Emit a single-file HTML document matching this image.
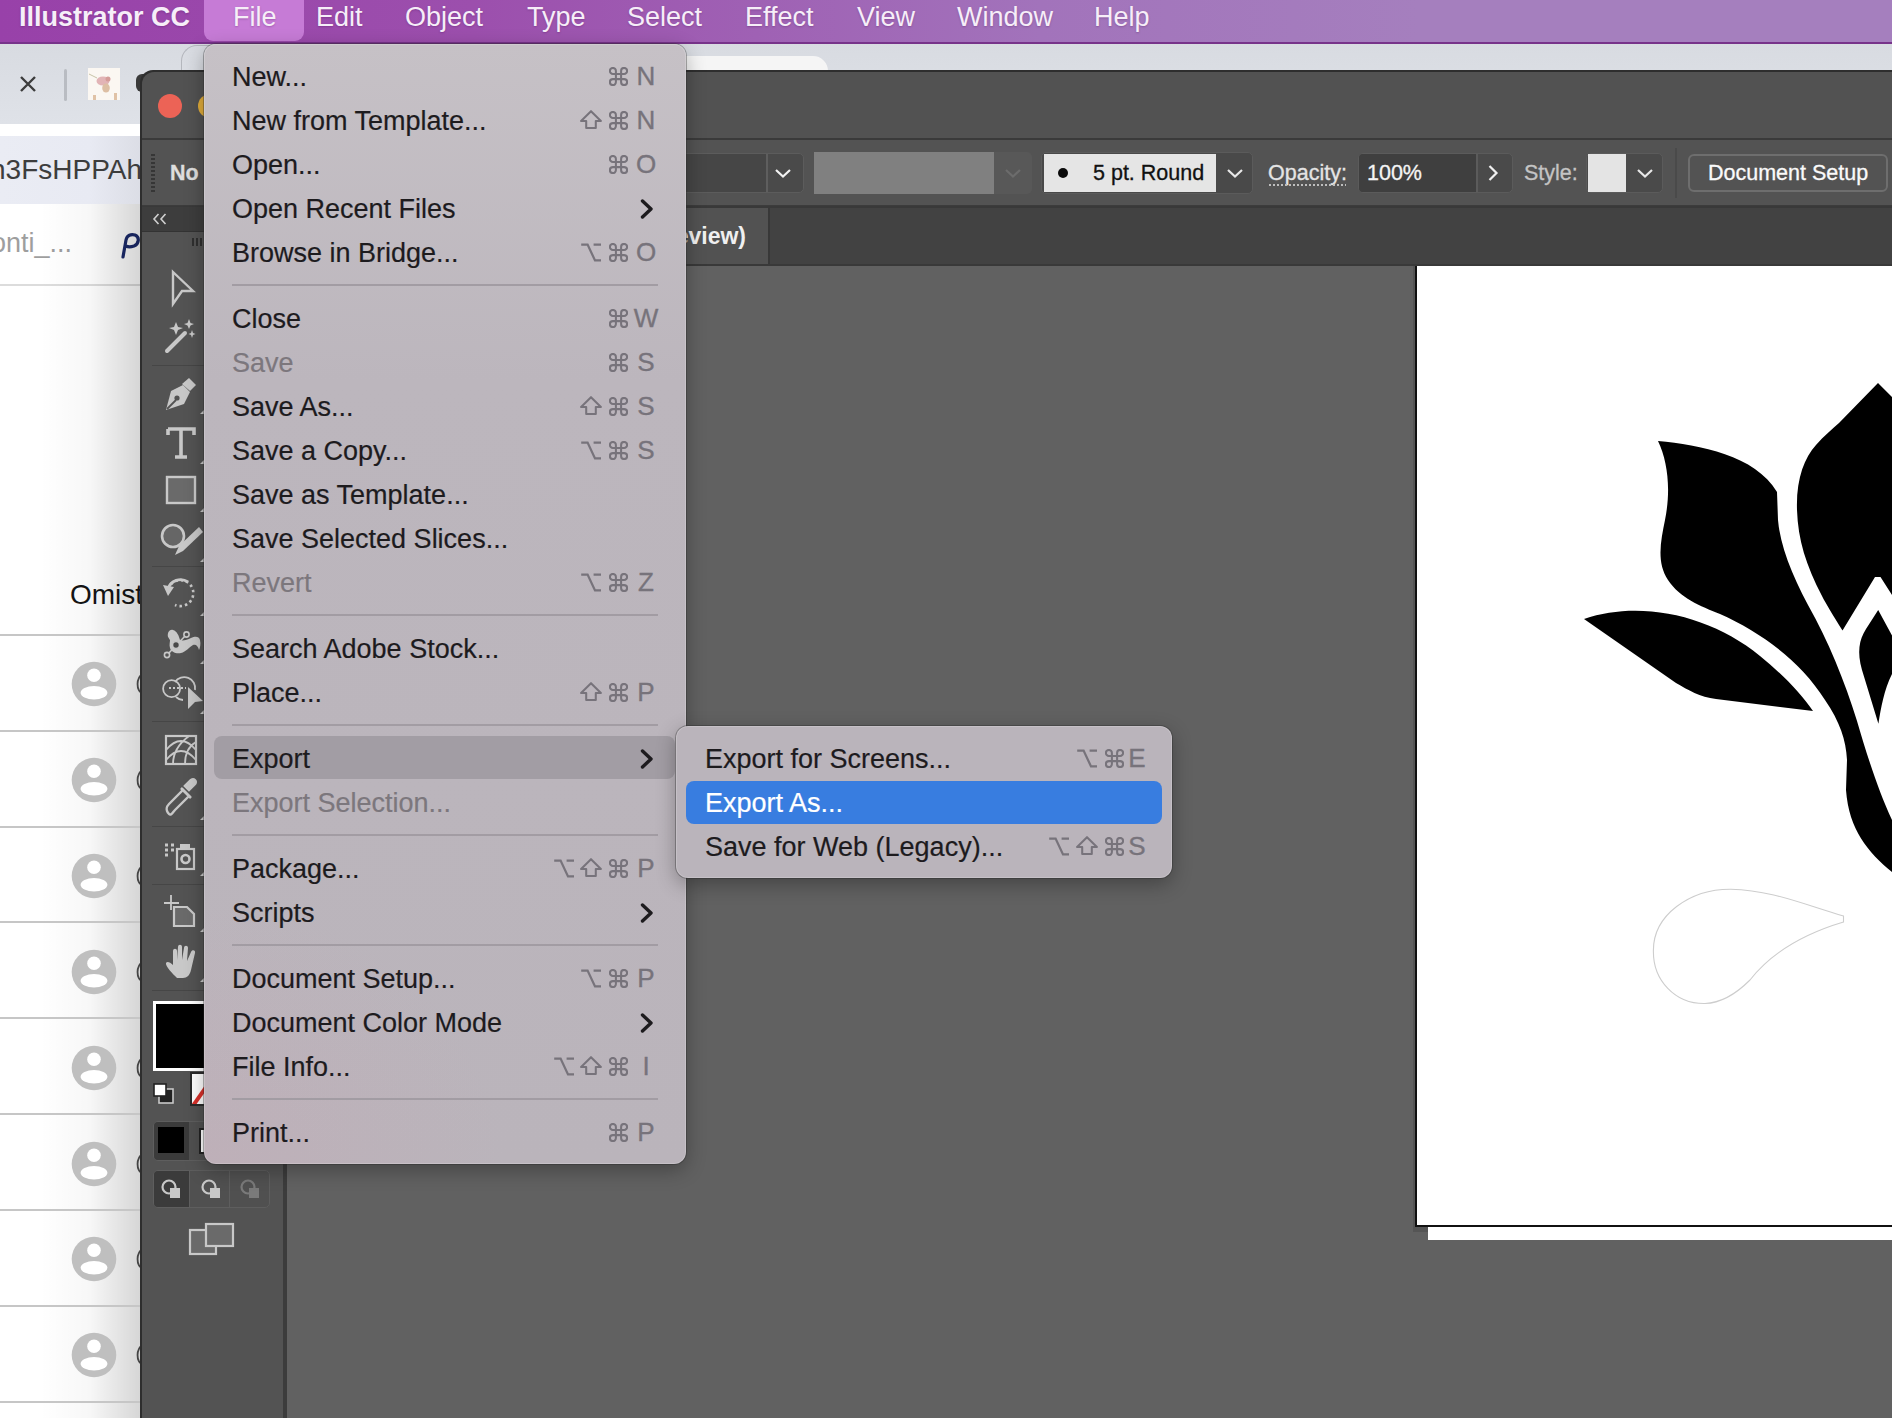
<!DOCTYPE html><html><head><meta charset="utf-8"><style>
*{margin:0;padding:0;box-sizing:border-box}
html,body{width:1892px;height:1418px;overflow:hidden;background:#ffffff;font-family:"Liberation Sans",sans-serif;position:relative}
.a{position:absolute}
#mb{left:0;top:0;width:1892px;height:44px;background:linear-gradient(90deg,#9841a9 0%,#9c4fad 25%,#a273bb 55%,#a57fbe 75%,#a57fbe 100%);border-bottom:2px solid #77338a}
#mb span{position:absolute;top:0;height:42px;line-height:34px;font-size:27px;color:#f6eef8;white-space:nowrap;text-shadow:0 1px 2px rgba(60,0,70,.25)}
#filehl{left:204px;top:0;width:100px;height:41px;background:#c67bd6;border-radius:0 0 9px 9px}
.ct{font-size:21.5px;line-height:26px;white-space:nowrap;-webkit-text-stroke:0.3px currentColor}
.menu{background:radial-gradient(ellipse 300px 260px at 0% 100%,rgba(205,160,175,.22),rgba(205,160,175,0)),linear-gradient(180deg,#c6c1c6 0%,#bcb6bd 30%,#bab4bb 100%);border-radius:12px;box-shadow:0 0 0 1px rgba(40,40,40,.35),inset 0 0 0 1px rgba(255,255,255,.18),0 6px 20px rgba(0,0,0,.3)}
.mi{position:absolute;left:28px;font-size:27px;color:#1d1b1e;height:44px;line-height:44px;white-space:nowrap;-webkit-text-stroke:0.2px currentColor}
.dis{color:#7c777d}
.sl{position:absolute;width:40px;text-align:center;font-size:26px;line-height:44px;height:44px;color:#77737b;-webkit-text-stroke:0.35px #77737b}
.hl{position:absolute;left:10px;width:461px;height:43px;background:#a29da4;border-radius:8px}
.bl{position:absolute;left:10px;width:476px;height:43px;background:#387de0;border-radius:8px}
.menu svg{color:#77737b}
.sep{position:absolute;left:28px;right:28px;height:2px;background:#a29ca3}
</style></head><body><div class="a" style="left:0;top:44px;width:1892px;height:80px;background:linear-gradient(180deg,#d8dbe1,#dfe2e8)"></div><div class="a" style="left:400px;top:56px;width:428px;height:30px;background:#f5f5f5;border-radius:0 15px 0 0"></div><div class="a" style="left:181px;top:45px;width:40px;height:40px;border-left:1px solid #b4b7bd;border-top:1px solid #b4b7bd;border-radius:16px 0 0 0"></div><svg class="a" style="left:19px;top:75px" width="18" height="18" viewBox="0 0 18 18"><path d="M2,2 L16,16 M16,2 L2,16" stroke="#3c3c3c" stroke-width="2.4"/></svg><div class="a" style="left:64px;top:69px;width:3px;height:32px;background:#b9bcc2;border-radius:2px"></div><svg class="a" style="left:88px;top:68px" width="32" height="32" viewBox="0 0 32 32"><rect width="32" height="32" fill="#fbf7f2"/><ellipse cx="15" cy="13" rx="6.5" ry="4.5" fill="#e2b4b6"/><ellipse cx="20" cy="11" rx="2.5" ry="2.5" fill="#d59c98"/><ellipse cx="18" cy="20" rx="3.8" ry="4.5" fill="#ddbfa4"/><rect x="5" y="27" width="3" height="5" fill="#e0c2a6"/><rect x="26" y="25" width="3" height="7" fill="#e0c2a6"/><path d="M1,6 L9,10" stroke="#c8c4a8" stroke-width="1"/></svg><div class="a" style="left:0;top:124px;width:160px;height:1294px;background:#fff"></div><div class="a" style="left:0;top:136px;width:150px;height:68px;background:linear-gradient(90deg,#eaecf4 0%,#e8eaf3 60%,#d9dbe3 100%)"></div><div class="a" style="left:-10px;top:152px;font-size:28px;line-height:36px;color:#3d3d3d;white-space:nowrap">n3FsHPPAh</div><div class="a" style="left:-9px;top:226.5px;font-size:27px;line-height:32px;color:#9e9e9e;white-space:nowrap">onti_...</div><svg class="a" style="left:120px;top:230px" width="22" height="30" viewBox="0 0 22 30"><path d="M3,27 L6,10 C7,5 11,4 15,5 C20,7 19,14 14,16 C11,17 8,17 6,16" fill="none" stroke="#1b2a6b" stroke-width="3.2" stroke-linecap="round"/></svg><div class="a" style="left:0;top:284px;width:150px;height:2px;background:#dcdcdc"></div><div class="a" style="left:70px;top:578px;font-size:28px;line-height:34px;color:#141414;white-space:nowrap">Omist</div><div class="a" style="left:40px;top:204px;width:100px;height:1214px;background:linear-gradient(90deg,rgba(0,0,0,0),rgba(0,0,0,.03) 50%,rgba(0,0,0,.16))"></div><div class="a" style="left:0;top:634px;width:150px;height:2px;background:#c6c6c6"></div><div class="a" style="left:0;top:730px;width:150px;height:2px;background:#c6c6c6"></div><div class="a" style="left:0;top:826px;width:150px;height:2px;background:#c6c6c6"></div><div class="a" style="left:0;top:921px;width:150px;height:2px;background:#c6c6c6"></div><div class="a" style="left:0;top:1017px;width:150px;height:2px;background:#c6c6c6"></div><div class="a" style="left:0;top:1113px;width:150px;height:2px;background:#c6c6c6"></div><div class="a" style="left:0;top:1209px;width:150px;height:2px;background:#c6c6c6"></div><div class="a" style="left:0;top:1305px;width:150px;height:2px;background:#c6c6c6"></div><div class="a" style="left:0;top:1401px;width:150px;height:2px;background:#c6c6c6"></div><svg class="a" style="left:71px;top:661.0px" width="46" height="46" viewBox="0 0 46 46"><circle cx="23" cy="23" r="22.3" fill="#bfbfbf"/><circle cx="23" cy="14.3" r="6.8" fill="#fff"/><ellipse cx="23" cy="31.8" rx="13.4" ry="6.8" fill="#fff"/></svg><svg class="a" style="left:134px;top:674.0px" width="10" height="20" viewBox="0 0 10 20"><path d="M9,1 C2,1 1.5,19 9,19" fill="none" stroke="#444" stroke-width="1.8"/></svg><svg class="a" style="left:71px;top:756.9px" width="46" height="46" viewBox="0 0 46 46"><circle cx="23" cy="23" r="22.3" fill="#bfbfbf"/><circle cx="23" cy="14.3" r="6.8" fill="#fff"/><ellipse cx="23" cy="31.8" rx="13.4" ry="6.8" fill="#fff"/></svg><svg class="a" style="left:134px;top:769.9px" width="10" height="20" viewBox="0 0 10 20"><path d="M9,1 C2,1 1.5,19 9,19" fill="none" stroke="#444" stroke-width="1.8"/></svg><svg class="a" style="left:71px;top:852.8px" width="46" height="46" viewBox="0 0 46 46"><circle cx="23" cy="23" r="22.3" fill="#bfbfbf"/><circle cx="23" cy="14.3" r="6.8" fill="#fff"/><ellipse cx="23" cy="31.8" rx="13.4" ry="6.8" fill="#fff"/></svg><svg class="a" style="left:134px;top:865.8px" width="10" height="20" viewBox="0 0 10 20"><path d="M9,1 C2,1 1.5,19 9,19" fill="none" stroke="#444" stroke-width="1.8"/></svg><svg class="a" style="left:71px;top:948.7px" width="46" height="46" viewBox="0 0 46 46"><circle cx="23" cy="23" r="22.3" fill="#bfbfbf"/><circle cx="23" cy="14.3" r="6.8" fill="#fff"/><ellipse cx="23" cy="31.8" rx="13.4" ry="6.8" fill="#fff"/></svg><svg class="a" style="left:134px;top:961.7px" width="10" height="20" viewBox="0 0 10 20"><path d="M9,1 C2,1 1.5,19 9,19" fill="none" stroke="#444" stroke-width="1.8"/></svg><svg class="a" style="left:71px;top:1044.6px" width="46" height="46" viewBox="0 0 46 46"><circle cx="23" cy="23" r="22.3" fill="#bfbfbf"/><circle cx="23" cy="14.3" r="6.8" fill="#fff"/><ellipse cx="23" cy="31.8" rx="13.4" ry="6.8" fill="#fff"/></svg><svg class="a" style="left:134px;top:1057.6px" width="10" height="20" viewBox="0 0 10 20"><path d="M9,1 C2,1 1.5,19 9,19" fill="none" stroke="#444" stroke-width="1.8"/></svg><svg class="a" style="left:71px;top:1140.5px" width="46" height="46" viewBox="0 0 46 46"><circle cx="23" cy="23" r="22.3" fill="#bfbfbf"/><circle cx="23" cy="14.3" r="6.8" fill="#fff"/><ellipse cx="23" cy="31.8" rx="13.4" ry="6.8" fill="#fff"/></svg><svg class="a" style="left:134px;top:1153.5px" width="10" height="20" viewBox="0 0 10 20"><path d="M9,1 C2,1 1.5,19 9,19" fill="none" stroke="#444" stroke-width="1.8"/></svg><svg class="a" style="left:71px;top:1236.4px" width="46" height="46" viewBox="0 0 46 46"><circle cx="23" cy="23" r="22.3" fill="#bfbfbf"/><circle cx="23" cy="14.3" r="6.8" fill="#fff"/><ellipse cx="23" cy="31.8" rx="13.4" ry="6.8" fill="#fff"/></svg><svg class="a" style="left:134px;top:1249.4px" width="10" height="20" viewBox="0 0 10 20"><path d="M9,1 C2,1 1.5,19 9,19" fill="none" stroke="#444" stroke-width="1.8"/></svg><svg class="a" style="left:71px;top:1332.3px" width="46" height="46" viewBox="0 0 46 46"><circle cx="23" cy="23" r="22.3" fill="#bfbfbf"/><circle cx="23" cy="14.3" r="6.8" fill="#fff"/><ellipse cx="23" cy="31.8" rx="13.4" ry="6.8" fill="#fff"/></svg><svg class="a" style="left:134px;top:1345.3px" width="10" height="20" viewBox="0 0 10 20"><path d="M9,1 C2,1 1.5,19 9,19" fill="none" stroke="#444" stroke-width="1.8"/></svg><div class="a" style="left:136px;top:74px;width:12px;height:18px;border-radius:6px 0 0 6px;background:#3a3a3a"></div><div class="a" style="left:140px;top:70px;width:1800px;height:1400px;background:#2e2e2e;border-radius:13px 0 0 0"></div><div class="a" style="left:142px;top:72px;width:1800px;height:1400px;background:#525252;border-radius:12px 0 0 0"></div><div class="a" style="left:158px;top:94px;width:24px;height:24px;border-radius:50%;background:#ec6356"></div><div class="a" style="left:198px;top:94px;width:24px;height:24px;border-radius:50%;background:#e0ac3a"></div><div class="a" style="left:142px;top:138px;width:1750px;height:2px;background:#3a3a3a"></div><div class="a" style="left:142px;top:140px;width:1750px;height:65px;background:#535353"></div><div class="a" style="left:142px;top:205px;width:1750px;height:2px;background:#3c3c3c"></div><div class="a" style="left:151px;top:154px;width:4px;height:38px;background:repeating-linear-gradient(180deg,#363636 0 2px,transparent 2px 4px)"></div><div class="a ct" style="left:170px;top:160px;font-weight:bold;color:#dedede">No</div><div class="a" style="left:660px;top:153px;width:144px;height:40px;background:#4a4a4a;border:1px solid #5c5c5c;border-radius:5px"></div><div class="a" style="left:660px;top:154px;width:106px;height:38px;background:#464646"></div><div class="a" style="left:766px;top:154px;width:2px;height:38px;background:#5e5e5e"></div><svg class="a" style="left:774px;top:167px" width="18" height="12" viewBox="0 0 18 12"><path d="M2,3 L9,9.5 L16,3" fill="none" stroke="#f2f2f2" stroke-width="2.2"/></svg><div class="a" style="left:814px;top:152px;width:218px;height:42px;background:#585858;border-radius:5px"></div><div class="a" style="left:814px;top:152px;width:180px;height:42px;background:#808080"></div><svg class="a" style="left:1004px;top:167px" width="18" height="12" viewBox="0 0 18 12"><path d="M2,3 L9,9.5 L16,3" fill="none" stroke="#6c6c6c" stroke-width="2.2"/></svg><div class="a" style="left:1041px;top:152px;width:212px;height:42px;background:#494949;border:1px solid #5b5b5b;border-radius:5px"></div><div class="a" style="left:1044px;top:154px;width:172px;height:38px;background:#e5e5e5"></div><div class="a" style="left:1058px;top:168px;width:10px;height:10px;border-radius:50%;background:#0a0a0a"></div><div class="a ct" style="left:1093px;top:160px;color:#111">5 pt. Round</div><svg class="a" style="left:1226px;top:167px" width="18" height="12" viewBox="0 0 18 12"><path d="M2,3 L9,9.5 L16,3" fill="none" stroke="#e8e8e8" stroke-width="2.2"/></svg><div class="a ct" style="left:1268px;top:160px;color:#e4e4e4">Opacity:</div><div class="a" style="left:1269px;top:184px;width:77px;height:2px;background:repeating-linear-gradient(90deg,#bdbdbd 0 2px,transparent 2px 4px)"></div><div class="a" style="left:1358px;top:153px;width:155px;height:40px;background:#4a4a4a;border:1px solid #5b5b5b;border-radius:5px"></div><div class="a" style="left:1359px;top:154px;width:117px;height:38px;background:#3f3f3f;border-radius:4px 0 0 4px"></div><div class="a" style="left:1476px;top:154px;width:2px;height:38px;background:#5b5b5b"></div><div class="a ct" style="left:1367px;top:160px;color:#f4f4f4">100%</div><svg class="a" style="left:1487px;top:164px" width="12" height="18" viewBox="0 0 12 18"><path d="M2.5,2 L9.5,9 L2.5,16" fill="none" stroke="#f0f0f0" stroke-width="2.2"/></svg><div class="a ct" style="left:1524px;top:160px;color:#c4c4c4">Style:</div><div class="a" style="left:1586px;top:153px;width:77px;height:40px;background:#4a4a4a;border:1px solid #5b5b5b;border-radius:5px"></div><div class="a" style="left:1588px;top:154px;width:38px;height:38px;background:#e4e4e4"></div><svg class="a" style="left:1636px;top:167px" width="18" height="12" viewBox="0 0 18 12"><path d="M2,3 L9,9.5 L16,3" fill="none" stroke="#e8e8e8" stroke-width="2.2"/></svg><div class="a" style="left:1675px;top:148px;width:2px;height:50px;background:#4a4a4a"></div><div class="a" style="left:1688px;top:154px;width:200px;height:38px;border:2px solid #6e6e6e;border-radius:6px;background:#535353"></div><div class="a ct" style="left:1708px;top:160px;color:#fafafa">Document Setup</div><div class="a" style="left:142px;top:206px;width:1750px;height:60px;background:#393939"></div><div class="a" style="left:142px;top:208px;width:1750px;height:56px;background:#424242"></div><div class="a" style="left:286px;top:208px;width:482px;height:56px;background:#525252"></div><div class="a" style="left:768px;top:208px;width:2px;height:56px;background:#383838"></div><div class="a" style="left:346px;top:220px;width:400px;text-align:right;font-size:23px;line-height:32px;font-weight:bold;color:#f0f0f0;white-space:nowrap">@ 100% (CMYK/Preview)</div><div class="a" style="left:286px;top:266px;width:1606px;height:1152px;background:#616161"></div><div class="a" style="left:1413px;top:266px;width:479px;height:966px;background:#555"></div><div class="a" style="left:1428px;top:1227px;width:464px;height:13px;background:#fff"></div><div class="a" style="left:1415px;top:266px;width:477px;height:961px;background:#111"></div><div class="a" style="left:1417px;top:266px;width:475px;height:959px;background:#fff"></div><div class="a" style="left:142px;top:207px;width:144px;height:1211px;background:#535353"></div><div class="a" style="left:142px;top:207px;width:144px;height:25px;background:#3d3d3d"></div><div class="a" style="left:142px;top:231px;width:144px;height:1px;background:#333"></div><svg class="a" style="left:152px;top:212px" width="16" height="14" viewBox="0 0 16 14"><path d="M6.5,2 L2,7 L6.5,12 M13.5,2 L9,7 L13.5,12" fill="none" stroke="#d0d0d0" stroke-width="1.6"/></svg><div class="a" style="left:283px;top:232px;width:4px;height:1186px;background:#3c3c3c"></div><div class="a" style="left:192px;top:238px;width:12px;height:8px;background:repeating-linear-gradient(90deg,#2f2f2f 0 2px,transparent 2px 4px)"></div><div class="a" style="left:152px;top:365px;width:120px;height:1px;background:#464646"></div><div class="a" style="left:152px;top:566px;width:120px;height:1px;background:#464646"></div><div class="a" style="left:152px;top:721px;width:120px;height:1px;background:#464646"></div><div class="a" style="left:152px;top:826px;width:120px;height:1px;background:#464646"></div><div class="a" style="left:152px;top:884px;width:120px;height:1px;background:#464646"></div><div class="a" style="left:152px;top:990px;width:120px;height:1px;background:#464646"></div><svg class="a" style="left:151px;top:263px" width="60" height="50" viewBox="-30 -25 60 50"><path d="M-8,-16 L12,3 L1,3 L-8,16 Z" fill="none" stroke="#c8c8c8" stroke-width="2.4" stroke-linejoin="miter"/></svg><svg class="a" style="left:151px;top:311px" width="60" height="50" viewBox="-30 -25 60 50"><path d="M-14,15 L4,-3" stroke="#c8c8c8" stroke-width="4" stroke-linecap="round"/><path d="M-5,-14 L-3,-9 L2,-8 L-3,-6 L-5,-1 L-7,-6 L-12,-8 L-7,-9 Z M8,-17 L9.5,-13 L13,-12 L9.5,-10.5 L8,-7 L6.5,-10.5 L3,-12 L6.5,-13 Z M11,-6 L12,-3 L14.5,-2 L12,-1 L11,2 L10,-1 L7.5,-2 L10,-3 Z" fill="#c8c8c8"/></svg><svg class="a" style="left:151px;top:369px" width="60" height="50" viewBox="-30 -25 60 50"><path d="M-15,16 L-10,-3 L2,-9 L9,-2 L3,10 Z" fill="#c8c8c8"/><path d="M3,-14 L10,-20 L17,-13 L11,-7 Z" fill="#c8c8c8" transform="translate(-2,4)"/><path d="M-14,15 L-5,6" stroke="#535353" stroke-width="1.8"/><circle cx="-4" cy="4" r="2.6" fill="#535353"/></svg><svg class="a" style="left:151px;top:418px" width="60" height="50" viewBox="-30 -25 60 50"><path d="M-13,-14 H13 V-8 M-13,-14 V-8 M0,-14 V14 M-6,14 H6" fill="none" stroke="#c8c8c8" stroke-width="3.6"/></svg><svg class="a" style="left:151px;top:465px" width="60" height="50" viewBox="-30 -25 60 50"><rect x="-14" y="-13" width="28" height="26" fill="#6a6a6a" stroke="#c8c8c8" stroke-width="2.4"/></svg><svg class="a" style="left:151px;top:514px" width="60" height="50" viewBox="-30 -25 60 50"><circle cx="-8" cy="-3" r="11" fill="#666" stroke="#c8c8c8" stroke-width="2.6"/><path d="M-6,16 L-2,7 L18,-12 L22,-7 L2,12 Z" fill="#c8c8c8"/></svg><svg class="a" style="left:151px;top:569px" width="60" height="50" viewBox="-30 -25 60 50"><path d="M-13,-5 A13,13 0 1 1 -6,11" fill="none" stroke="#c8c8c8" stroke-width="2.6" stroke-dasharray="2.5 3"/><path d="M-13,-5 A13,13 0 0 1 7,-12" fill="none" stroke="#c8c8c8" stroke-width="2.8"/><path d="M-18,-9 L-13,2 L-7,-7 Z" fill="#c8c8c8"/></svg><svg class="a" style="left:151px;top:619px" width="60" height="50" viewBox="-30 -25 60 50"><path d="M-13,-7 C-14,-12 -11,-15 -8,-14 C-4,-13 -2,-8 -1,-4 C2,-3 6,-4 10,-6 C14,-8 18,-8 19,-4 C20,0 19,4 18,6 C17,2 15,0 12,1 C8,3 5,8 0,9 C-5,10 -10,8 -11,4 C-12,1 -11,-2 -11,-4 C-12,-5 -12,-6 -13,-7 Z" fill="#c8c8c8"/><path d="M-14,11 L5.5,-9.5" stroke="#c8c8c8" stroke-width="1.6"/><circle cx="-14" cy="11" r="2.6" fill="#535353" stroke="#c8c8c8" stroke-width="1.6"/><circle cx="5.5" cy="-9.5" r="2.6" fill="#535353" stroke="#c8c8c8" stroke-width="1.6"/><circle cx="-5" cy="1" r="3.4" fill="#4a4a4a" stroke="#c8c8c8" stroke-width="1.4"/></svg><svg class="a" style="left:151px;top:666px" width="60" height="50" viewBox="-30 -25 60 50"><circle cx="-9.4" cy="-2.3" r="8.5" fill="none" stroke="#c8c8c8" stroke-width="1.8"/><path d="M-6,-9 A11,11 0 0 1 14,-1" fill="none" stroke="#c8c8c8" stroke-width="1.8"/><path d="M-5,6 A11,11 0 0 0 2,9" fill="none" stroke="#c8c8c8" stroke-width="1.8"/><path d="M-12,-3 H5" stroke="#c8c8c8" stroke-width="1.8" stroke-dasharray="2 2"/><path d="M7,-4 L22,10 L14,11 L7,18 Z" fill="#c8c8c8"/></svg><svg class="a" style="left:151px;top:725px" width="60" height="50" viewBox="-30 -25 60 50"><rect x="-15" y="-14" width="30" height="28" fill="none" stroke="#c8c8c8" stroke-width="2.2"/><path d="M-15,0 C-5,-12 5,-12 15,0 M-15,10 C-5,-2 5,-2 15,10 M-8,14 C-8,0 0,-8 8,-14 M4,14 C4,2 8,-4 15,-8" fill="none" stroke="#c8c8c8" stroke-width="1.8"/></svg><svg class="a" style="left:151px;top:773px" width="60" height="50" viewBox="-30 -25 60 50"><path d="M-12,16 C-16,12 -14,8 -12,6 L2,-8 L8,-2 L-6,12 C-8,14 -10,18 -12,16 Z" fill="none" stroke="#c8c8c8" stroke-width="2.4"/><path d="M0,-10 L10,0 M4,-12 L10,-18 C13,-20 16,-17 14,-14 L8,-8 Z" fill="#c8c8c8" stroke="#c8c8c8" stroke-width="2.6"/></svg><svg class="a" style="left:151px;top:830px" width="60" height="50" viewBox="-30 -25 60 50"><rect x="-4" y="-6" width="17" height="20" fill="none" stroke="#c8c8c8" stroke-width="2.2"/><circle cx="4.5" cy="4" r="4" fill="none" stroke="#c8c8c8" stroke-width="2.6"/><rect x="-1" y="-11" width="10" height="5" fill="#c8c8c8"/><path d="M-16,-10 h3 M-10,-10 h3 M-16,-5 h3 M-10,-5 h3 M-16,0 h3" stroke="#c8c8c8" stroke-width="3"/></svg><svg class="a" style="left:151px;top:887px" width="60" height="50" viewBox="-30 -25 60 50"><path d="M-17,-9 H-2 M-10,-17 V-2" stroke="#c8c8c8" stroke-width="1.8"/><path d="M-7,-5 H6 L13,2 V14 H-7 Z" fill="#6a6a6a" stroke="#c8c8c8" stroke-width="2.2"/></svg><svg class="a" style="left:151px;top:937px" width="60" height="50" viewBox="-30 -25 60 50"><path transform="translate(2,0)" d="M-6,16 C-10,12 -18,4 -17,1 C-16,-1 -13,0 -10,3 L-10,-11 C-10,-14 -6,-14 -6,-11 L-6,-2 L-5,-15 C-5,-18 -1,-18 -1,-15 L-1,-2 L1,-14 C1,-17 5,-17 5,-14 L4,-1 L8,-10 C9,-13 13,-12 12,-9 L8,8 C7,13 4,16 0,16 Z" fill="#c8c8c8"/></svg><div class="a" style="left:200px;top:410px;width:0;height:0;border-left:4px solid transparent;border-bottom:4px solid #c8c8c8"></div><div class="a" style="left:200px;top:460px;width:0;height:0;border-left:4px solid transparent;border-bottom:4px solid #c8c8c8"></div><div class="a" style="left:200px;top:508px;width:0;height:0;border-left:4px solid transparent;border-bottom:4px solid #c8c8c8"></div><div class="a" style="left:200px;top:558px;width:0;height:0;border-left:4px solid transparent;border-bottom:4px solid #c8c8c8"></div><div class="a" style="left:200px;top:612px;width:0;height:0;border-left:4px solid transparent;border-bottom:4px solid #c8c8c8"></div><div class="a" style="left:200px;top:660px;width:0;height:0;border-left:4px solid transparent;border-bottom:4px solid #c8c8c8"></div><div class="a" style="left:200px;top:710px;width:0;height:0;border-left:4px solid transparent;border-bottom:4px solid #c8c8c8"></div><div class="a" style="left:200px;top:816px;width:0;height:0;border-left:4px solid transparent;border-bottom:4px solid #c8c8c8"></div><div class="a" style="left:200px;top:872px;width:0;height:0;border-left:4px solid transparent;border-bottom:4px solid #c8c8c8"></div><div class="a" style="left:200px;top:928px;width:0;height:0;border-left:4px solid transparent;border-bottom:4px solid #c8c8c8"></div><div class="a" style="left:200px;top:978px;width:0;height:0;border-left:4px solid transparent;border-bottom:4px solid #c8c8c8"></div><div class="a" style="left:153px;top:1001px;width:60px;height:70px;background:#fff"></div><div class="a" style="left:156px;top:1004px;width:60px;height:64px;background:#000"></div><div class="a" style="left:190px;top:1072px;width:30px;height:34px;background:#fff;border:2px solid #2a2a2a;overflow:hidden"><div class="a" style="left:-8px;top:14px;width:40px;height:4px;background:#d9302a;transform:rotate(-55deg)"></div></div><svg class="a" style="left:151px;top:1081px" width="26" height="26" viewBox="0 0 26 26"><rect x="8" y="8" width="14" height="14" fill="#222" stroke="#c8c8c8" stroke-width="1.6"/><rect x="3" y="3" width="12" height="12" fill="#fff" stroke="#222" stroke-width="1.6"/></svg><div class="a" style="left:153px;top:1121px;width:120px;height:40px;border:1px solid #5e5e5e;border-radius:5px;background:#505050"></div><div class="a" style="left:154px;top:1122px;width:35px;height:38px;background:#3b3b3b;border-radius:4px 0 0 4px"></div><div class="a" style="left:158px;top:1127px;width:26px;height:26px;background:#000"></div><div class="a" style="left:199px;top:1128px;width:20px;height:26px;background:#fff;border:2px solid #222"></div><div class="a" style="left:153px;top:1170px;width:117px;height:38px;border:1px solid #5e5e5e;border-radius:5px;background:#505050"></div><div class="a" style="left:154px;top:1171px;width:35px;height:36px;background:#3b3b3b;border-radius:4px 0 0 4px"></div><div class="a" style="left:189px;top:1171px;width:1px;height:36px;background:#5e5e5e"></div><div class="a" style="left:229px;top:1171px;width:1px;height:36px;background:#5e5e5e"></div><svg class="a" style="left:159px;top:1177px" width="24" height="24" viewBox="0 0 24 24" opacity="1"><circle cx="10" cy="10" r="6.5" fill="none" stroke="#c8c8c8" stroke-width="2.2"/><rect x="11" y="11" width="10" height="10" fill="#c8c8c8"/></svg><svg class="a" style="left:199px;top:1177px" width="24" height="24" viewBox="0 0 24 24" opacity="1"><circle cx="10" cy="10" r="6.5" fill="none" stroke="#c8c8c8" stroke-width="2.2"/><rect x="11" y="11" width="10" height="10" fill="#c8c8c8"/></svg><svg class="a" style="left:238px;top:1177px" width="24" height="24" viewBox="0 0 24 24" opacity="0.35"><circle cx="10" cy="10" r="6.5" fill="none" stroke="#c8c8c8" stroke-width="2.2"/><rect x="11" y="11" width="10" height="10" fill="#c8c8c8"/></svg><svg class="a" style="left:188px;top:1222px" width="48" height="36" viewBox="0 0 48 36"><rect x="2" y="8" width="26" height="24" fill="#6a6a6a" stroke="#c8c8c8" stroke-width="2.2"/><rect x="18" y="2" width="27" height="22" fill="#6a6a6a" stroke="#c8c8c8" stroke-width="2.2"/></svg><svg class="a" style="left:0;top:0" width="1892" height="1418" viewBox="0 0 1892 1418"><path d="M1658,441 C1668,462 1671,490 1665,520 C1661,540 1656,562 1668,580 C1680,598 1700,606 1720,614 C1760,632 1800,660 1825,700 C1840,722 1846,740 1847,760 L1846,790 C1849,830 1868,852 1892,872 L1892,820 C1878,790 1866,752 1857,721 C1845,682 1828,640 1808,605 C1792,575 1780,545 1778,520 L1777,492 C1755,455 1700,445 1658,441 Z" fill="#000"/><path d="M1584,619 C1640,600 1710,615 1760,656 C1780,672 1800,692 1813,711 L1716,699 C1700,697 1688,690 1676,683 Z" fill="#000"/><path d="M1878,383 L1892,397 L1892,595 L1880.5,577 L1875,577 L1842.5,630.6 C1833,615 1826,604 1822,596 C1806,565 1798,540 1797,510 C1796,480 1804,458 1816,445 C1824,436 1832,429 1839,423 Z" fill="#000"/><path d="M1878.2,610 L1892,635.5 L1892,674 C1884,690 1881,708 1878.4,723.7 L1862,670 C1857,652 1859,640 1866,629 Z" fill="#000"/><path d="M1843.5,916 L1843.5,922 C1810,932 1775,948 1750,980 C1735,995 1720,1003 1705,1003.5 C1675,1004 1653,980 1653.4,951 C1653,915 1690,889 1730.7,889.2 C1770,890 1800,903 1843.5,916 Z" fill="none" stroke="#cdcdcd" stroke-width="1.1"/></svg><div id="mb" class="a"><div id="filehl" class="a"></div>
<span style="left:19px;font-weight:bold">Illustrator CC</span>
<span style="left:233px">File</span><span style="left:316px">Edit</span><span style="left:405px">Object</span>
<span style="left:527px">Type</span><span style="left:627px">Select</span><span style="left:745px">Effect</span>
<span style="left:857px">View</span><span style="left:957px">Window</span><span style="left:1094px">Help</span></div><div id="menu" class="a menu" style="left:204px;top:44px;width:482px;height:1120px"><div class="mi" style="top:11px">New...</div><span class="sl" style="left:422px;top:10px">N</span><svg class="a" style="left:405.0px;top:22.5px" width="19" height="19" viewBox="0 0 19 19"><path d="M6.9,3.9 A3,3 0 1 0 3.9,6.9 H15.1 A3,3 0 1 0 12.1,3.9 V15.1 A3,3 0 1 0 15.1,12.1 H3.9 A3,3 0 1 0 6.9,15.1 Z" fill="none" stroke="currentColor" stroke-width="2.05"/></svg><div class="mi" style="top:55px">New from Template...</div><span class="sl" style="left:422px;top:54px">N</span><svg class="a" style="left:405.0px;top:66.5px" width="19" height="19" viewBox="0 0 19 19"><path d="M6.9,3.9 A3,3 0 1 0 3.9,6.9 H15.1 A3,3 0 1 0 12.1,3.9 V15.1 A3,3 0 1 0 15.1,12.1 H3.9 A3,3 0 1 0 6.9,15.1 Z" fill="none" stroke="currentColor" stroke-width="2.05"/></svg><svg class="a" style="left:376.0px;top:66.3px" width="22" height="19.3" viewBox="0 0 22 19.3"><path d="M11,1.2 L1.1,11 H6.2 V18.1 H15.8 V11 H20.9 Z" fill="none" stroke="currentColor" stroke-width="2.05" stroke-linejoin="round"/></svg><div class="mi" style="top:99px">Open...</div><span class="sl" style="left:422px;top:98px">O</span><svg class="a" style="left:405.0px;top:110.5px" width="19" height="19" viewBox="0 0 19 19"><path d="M6.9,3.9 A3,3 0 1 0 3.9,6.9 H15.1 A3,3 0 1 0 12.1,3.9 V15.1 A3,3 0 1 0 15.1,12.1 H3.9 A3,3 0 1 0 6.9,15.1 Z" fill="none" stroke="currentColor" stroke-width="2.05"/></svg><div class="mi" style="top:143px">Open Recent Files</div><svg class="a" style="left:436px;top:155px" width="14" height="20" viewBox="0 0 14 20"><path d="M2.5,2 L11,10 L2.5,18" fill="none" stroke="#1d1b1e" stroke-width="3.4" stroke-linecap="round" stroke-linejoin="round"/></svg><div class="mi" style="top:187px">Browse in Bridge...</div><span class="sl" style="left:422px;top:186px">O</span><svg class="a" style="left:405.0px;top:198.5px" width="19" height="19" viewBox="0 0 19 19"><path d="M6.9,3.9 A3,3 0 1 0 3.9,6.9 H15.1 A3,3 0 1 0 12.1,3.9 V15.1 A3,3 0 1 0 15.1,12.1 H3.9 A3,3 0 1 0 6.9,15.1 Z" fill="none" stroke="currentColor" stroke-width="2.05"/></svg><svg class="a" style="left:376.6px;top:198.5px" width="20.8" height="19" viewBox="0 0 20.8 19"><path d="M0.2,1.6 H6.6 L14,17.4 H20.6 M12.6,1.6 H20.6" fill="none" stroke="currentColor" stroke-width="2.25"/></svg><div class="sep" style="top:240px"></div><div class="mi" style="top:253px">Close</div><span class="sl" style="left:422px;top:252px">W</span><svg class="a" style="left:405.0px;top:264.5px" width="19" height="19" viewBox="0 0 19 19"><path d="M6.9,3.9 A3,3 0 1 0 3.9,6.9 H15.1 A3,3 0 1 0 12.1,3.9 V15.1 A3,3 0 1 0 15.1,12.1 H3.9 A3,3 0 1 0 6.9,15.1 Z" fill="none" stroke="currentColor" stroke-width="2.05"/></svg><div class="mi dis" style="top:297px">Save</div><span class="sl" style="left:422px;top:296px">S</span><svg class="a" style="left:405.0px;top:308.5px" width="19" height="19" viewBox="0 0 19 19"><path d="M6.9,3.9 A3,3 0 1 0 3.9,6.9 H15.1 A3,3 0 1 0 12.1,3.9 V15.1 A3,3 0 1 0 15.1,12.1 H3.9 A3,3 0 1 0 6.9,15.1 Z" fill="none" stroke="currentColor" stroke-width="2.05"/></svg><div class="mi" style="top:341px">Save As...</div><span class="sl" style="left:422px;top:340px">S</span><svg class="a" style="left:405.0px;top:352.5px" width="19" height="19" viewBox="0 0 19 19"><path d="M6.9,3.9 A3,3 0 1 0 3.9,6.9 H15.1 A3,3 0 1 0 12.1,3.9 V15.1 A3,3 0 1 0 15.1,12.1 H3.9 A3,3 0 1 0 6.9,15.1 Z" fill="none" stroke="currentColor" stroke-width="2.05"/></svg><svg class="a" style="left:376.0px;top:352.4px" width="22" height="19.3" viewBox="0 0 22 19.3"><path d="M11,1.2 L1.1,11 H6.2 V18.1 H15.8 V11 H20.9 Z" fill="none" stroke="currentColor" stroke-width="2.05" stroke-linejoin="round"/></svg><div class="mi" style="top:385px">Save a Copy...</div><span class="sl" style="left:422px;top:384px">S</span><svg class="a" style="left:405.0px;top:396.5px" width="19" height="19" viewBox="0 0 19 19"><path d="M6.9,3.9 A3,3 0 1 0 3.9,6.9 H15.1 A3,3 0 1 0 12.1,3.9 V15.1 A3,3 0 1 0 15.1,12.1 H3.9 A3,3 0 1 0 6.9,15.1 Z" fill="none" stroke="currentColor" stroke-width="2.05"/></svg><svg class="a" style="left:376.6px;top:396.5px" width="20.8" height="19" viewBox="0 0 20.8 19"><path d="M0.2,1.6 H6.6 L14,17.4 H20.6 M12.6,1.6 H20.6" fill="none" stroke="currentColor" stroke-width="2.25"/></svg><div class="mi" style="top:429px">Save as Template...</div><div class="mi" style="top:473px">Save Selected Slices...</div><div class="mi dis" style="top:517px">Revert</div><span class="sl" style="left:422px;top:516px">Z</span><svg class="a" style="left:405.0px;top:528.5px" width="19" height="19" viewBox="0 0 19 19"><path d="M6.9,3.9 A3,3 0 1 0 3.9,6.9 H15.1 A3,3 0 1 0 12.1,3.9 V15.1 A3,3 0 1 0 15.1,12.1 H3.9 A3,3 0 1 0 6.9,15.1 Z" fill="none" stroke="currentColor" stroke-width="2.05"/></svg><svg class="a" style="left:376.6px;top:528.5px" width="20.8" height="19" viewBox="0 0 20.8 19"><path d="M0.2,1.6 H6.6 L14,17.4 H20.6 M12.6,1.6 H20.6" fill="none" stroke="currentColor" stroke-width="2.25"/></svg><div class="sep" style="top:570px"></div><div class="mi" style="top:583px">Search Adobe Stock...</div><div class="mi" style="top:627px">Place...</div><span class="sl" style="left:422px;top:626px">P</span><svg class="a" style="left:405.0px;top:638.5px" width="19" height="19" viewBox="0 0 19 19"><path d="M6.9,3.9 A3,3 0 1 0 3.9,6.9 H15.1 A3,3 0 1 0 12.1,3.9 V15.1 A3,3 0 1 0 15.1,12.1 H3.9 A3,3 0 1 0 6.9,15.1 Z" fill="none" stroke="currentColor" stroke-width="2.05"/></svg><svg class="a" style="left:376.0px;top:638.4px" width="22" height="19.3" viewBox="0 0 22 19.3"><path d="M11,1.2 L1.1,11 H6.2 V18.1 H15.8 V11 H20.9 Z" fill="none" stroke="currentColor" stroke-width="2.05" stroke-linejoin="round"/></svg><div class="sep" style="top:680px"></div><div class="hl" style="top:692px"></div><div class="mi" style="top:693px">Export</div><svg class="a" style="left:436px;top:705px" width="14" height="20" viewBox="0 0 14 20"><path d="M2.5,2 L11,10 L2.5,18" fill="none" stroke="#1d1b1e" stroke-width="3.4" stroke-linecap="round" stroke-linejoin="round"/></svg><div class="mi dis" style="top:737px">Export Selection...</div><div class="sep" style="top:790px"></div><div class="mi" style="top:803px">Package...</div><span class="sl" style="left:422px;top:802px">P</span><svg class="a" style="left:405.0px;top:814.5px" width="19" height="19" viewBox="0 0 19 19"><path d="M6.9,3.9 A3,3 0 1 0 3.9,6.9 H15.1 A3,3 0 1 0 12.1,3.9 V15.1 A3,3 0 1 0 15.1,12.1 H3.9 A3,3 0 1 0 6.9,15.1 Z" fill="none" stroke="currentColor" stroke-width="2.05"/></svg><svg class="a" style="left:376.0px;top:814.4px" width="22" height="19.3" viewBox="0 0 22 19.3"><path d="M11,1.2 L1.1,11 H6.2 V18.1 H15.8 V11 H20.9 Z" fill="none" stroke="currentColor" stroke-width="2.05" stroke-linejoin="round"/></svg><svg class="a" style="left:349.6px;top:814.5px" width="20.8" height="19" viewBox="0 0 20.8 19"><path d="M0.2,1.6 H6.6 L14,17.4 H20.6 M12.6,1.6 H20.6" fill="none" stroke="currentColor" stroke-width="2.25"/></svg><div class="mi" style="top:847px">Scripts</div><svg class="a" style="left:436px;top:859px" width="14" height="20" viewBox="0 0 14 20"><path d="M2.5,2 L11,10 L2.5,18" fill="none" stroke="#1d1b1e" stroke-width="3.4" stroke-linecap="round" stroke-linejoin="round"/></svg><div class="sep" style="top:900px"></div><div class="mi" style="top:913px">Document Setup...</div><span class="sl" style="left:422px;top:912px">P</span><svg class="a" style="left:405.0px;top:924.5px" width="19" height="19" viewBox="0 0 19 19"><path d="M6.9,3.9 A3,3 0 1 0 3.9,6.9 H15.1 A3,3 0 1 0 12.1,3.9 V15.1 A3,3 0 1 0 15.1,12.1 H3.9 A3,3 0 1 0 6.9,15.1 Z" fill="none" stroke="currentColor" stroke-width="2.05"/></svg><svg class="a" style="left:376.6px;top:924.5px" width="20.8" height="19" viewBox="0 0 20.8 19"><path d="M0.2,1.6 H6.6 L14,17.4 H20.6 M12.6,1.6 H20.6" fill="none" stroke="currentColor" stroke-width="2.25"/></svg><div class="mi" style="top:957px">Document Color Mode</div><svg class="a" style="left:436px;top:969px" width="14" height="20" viewBox="0 0 14 20"><path d="M2.5,2 L11,10 L2.5,18" fill="none" stroke="#1d1b1e" stroke-width="3.4" stroke-linecap="round" stroke-linejoin="round"/></svg><div class="mi" style="top:1001px">File Info...</div><span class="sl" style="left:422px;top:1000px">I</span><svg class="a" style="left:405.0px;top:1012.5px" width="19" height="19" viewBox="0 0 19 19"><path d="M6.9,3.9 A3,3 0 1 0 3.9,6.9 H15.1 A3,3 0 1 0 12.1,3.9 V15.1 A3,3 0 1 0 15.1,12.1 H3.9 A3,3 0 1 0 6.9,15.1 Z" fill="none" stroke="currentColor" stroke-width="2.05"/></svg><svg class="a" style="left:376.0px;top:1012.4px" width="22" height="19.3" viewBox="0 0 22 19.3"><path d="M11,1.2 L1.1,11 H6.2 V18.1 H15.8 V11 H20.9 Z" fill="none" stroke="currentColor" stroke-width="2.05" stroke-linejoin="round"/></svg><svg class="a" style="left:349.6px;top:1012.5px" width="20.8" height="19" viewBox="0 0 20.8 19"><path d="M0.2,1.6 H6.6 L14,17.4 H20.6 M12.6,1.6 H20.6" fill="none" stroke="currentColor" stroke-width="2.25"/></svg><div class="sep" style="top:1054px"></div><div class="mi" style="top:1067px">Print...</div><span class="sl" style="left:422px;top:1066px">P</span><svg class="a" style="left:405.0px;top:1078.5px" width="19" height="19" viewBox="0 0 19 19"><path d="M6.9,3.9 A3,3 0 1 0 3.9,6.9 H15.1 A3,3 0 1 0 12.1,3.9 V15.1 A3,3 0 1 0 15.1,12.1 H3.9 A3,3 0 1 0 6.9,15.1 Z" fill="none" stroke="currentColor" stroke-width="2.05"/></svg></div><div id="sub" class="a menu" style="left:676px;top:726px;width:496px;height:152px;background:#bab4bb"><div class="mi" style="left:29px;top:11px">Export for Screens...</div><span class="sl" style="left:441px;top:10px">E</span><svg class="a" style="left:429.0px;top:22.5px" width="19" height="19" viewBox="0 0 19 19"><path d="M6.9,3.9 A3,3 0 1 0 3.9,6.9 H15.1 A3,3 0 1 0 12.1,3.9 V15.1 A3,3 0 1 0 15.1,12.1 H3.9 A3,3 0 1 0 6.9,15.1 Z" fill="none" stroke="currentColor" stroke-width="2.05"/></svg><svg class="a" style="left:400.6px;top:22.5px" width="20.8" height="19" viewBox="0 0 20.8 19"><path d="M0.2,1.6 H6.6 L14,17.4 H20.6 M12.6,1.6 H20.6" fill="none" stroke="currentColor" stroke-width="2.25"/></svg><div class="bl" style="top:54.5px"></div><div class="mi" style="left:29px;top:55px;color:#fff">Export As...</div><div class="mi" style="left:29px;top:99px">Save for Web (Legacy)...</div><span class="sl" style="left:441px;top:98px">S</span><svg class="a" style="left:429.0px;top:110.5px" width="19" height="19" viewBox="0 0 19 19"><path d="M6.9,3.9 A3,3 0 1 0 3.9,6.9 H15.1 A3,3 0 1 0 12.1,3.9 V15.1 A3,3 0 1 0 15.1,12.1 H3.9 A3,3 0 1 0 6.9,15.1 Z" fill="none" stroke="currentColor" stroke-width="2.05"/></svg><svg class="a" style="left:400.0px;top:110.3px" width="22" height="19.3" viewBox="0 0 22 19.3"><path d="M11,1.2 L1.1,11 H6.2 V18.1 H15.8 V11 H20.9 Z" fill="none" stroke="currentColor" stroke-width="2.05" stroke-linejoin="round"/></svg><svg class="a" style="left:372.6px;top:110.5px" width="20.8" height="19" viewBox="0 0 20.8 19"><path d="M0.2,1.6 H6.6 L14,17.4 H20.6 M12.6,1.6 H20.6" fill="none" stroke="currentColor" stroke-width="2.25"/></svg></div></body></html>
